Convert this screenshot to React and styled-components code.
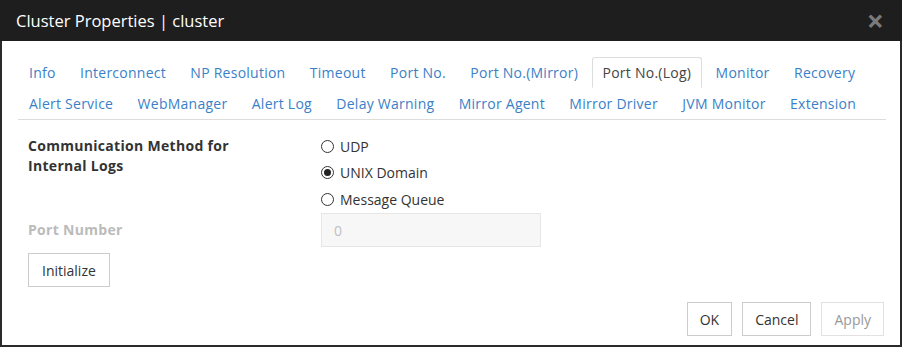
import { useState } from "react";
import styled, { createGlobalStyle } from "styled-components";

const GlobalStyle = createGlobalStyle`
  html, body {
    margin: 0;
    padding: 0;
    background: #ffffff;
  }
  body {
    font-family: "Open Sans", "Noto Sans", sans-serif;
    font-size: 14px;
    color: #333333;
  }
`;

const tabRows = [
  ["Info", "Interconnect", "NP Resolution", "Timeout", "Port No.", "Port No.(Mirror)", "Port No.(Log)", "Monitor", "Recovery"],
  ["Alert Service", "WebManager", "Alert Log", "Delay Warning", "Mirror Agent", "Mirror Driver", "JVM Monitor", "Extension"],
];

const methods = ["UDP", "UNIX Domain", "Message Queue"];

export default function App() {
  const [active, setActive] = useState("Port No.(Log)");
  const [method, setMethod] = useState("UNIX Domain");

  return (
    <>
      <GlobalStyle />
      <Dialog>
        <Header>
          <Title>Cluster Properties | cluster</Title>
          <Close>×</Close>
        </Header>
        <Body>
          <Tabs>
            {tabRows.map((row, i) => (
              <TabRow key={i}>
                {row.map((t) => (
                  <Tab key={t} $active={t === active} onClick={() => setActive(t)}>
                    {t}
                  </Tab>
                ))}
              </TabRow>
            ))}
          </Tabs>
          <Form>
            <Label>Communication Method for<br />Internal Logs</Label>
            <Radios>
              {methods.map((m) => (
                <RadioRow key={m} onClick={() => setMethod(m)}>
                  <Radio $checked={m === method} />
                  {m}
                </RadioRow>
              ))}
            </Radios>
            <Label $disabled>Port Number</Label>
            <Input value="0" disabled readOnly />
          </Form>
          <Button>Initialize</Button>
          <Footer>
            <Button>OK</Button>
            <Button>Cancel</Button>
            <Button $disabled>Apply</Button>
          </Footer>
        </Body>
      </Dialog>
    </>
  );
}

const Dialog = styled.div`
  width: 898px;
  height: 345px;
  border: 2px solid #2a2a2a;
  border-top: none;
  display: flex;
  flex-direction: column;
  background: #fff;
`;

const Header = styled.div`
  height: 41px;
  background: #1e1e1e;
  display: flex;
  align-items: center;
  justify-content: space-between;
  padding: 0 18px 0 16px;
  margin: 0 -2px;
`;

const Title = styled.div`
  color: #ffffff;
  font-size: 16.5px;
`;

const Close = styled.div`
  color: #7a7a7a;
  font-size: 30px;
  font-weight: 700;
  line-height: 1;
`;

const Body = styled.div`
  flex: 1;
  padding: 16px 15px 0 16px;
  display: flex;
  flex-direction: column;
`;

const Tabs = styled.div`
  border-bottom: 1px solid #dddddd;
  width: 868px;
`;

const TabRow = styled.div`
  display: flex;
  height: 31px;
`;

const Tab = styled.div`
  padding: 0 10px;
  margin-right: 2.4px;
  display: flex;
  align-items: center;
  letter-spacing: 0.25px;
  color: ${(p) => (p.$active ? "#444444" : "#3a7fc8")};
  border: 1px solid ${(p) => (p.$active ? "#dddddd" : "transparent")};
  border-bottom: ${(p) => (p.$active ? "1px solid #fff" : "1px solid transparent")};
  border-radius: 3px 3px 0 0;
  background: #fff;
  cursor: pointer;
`;

const Form = styled.div`
  display: grid;
  grid-template-columns: 293px 220px;
  row-gap: 4px;
  padding: 16px 0 0 10px;
`;

const Label = styled.div`
  font-weight: 700;
  line-height: 20px;
  letter-spacing: 0.3px;
  color: ${(p) => (p.$disabled ? "#bbbbbb" : "#333333")};
  align-self: ${(p) => (p.$disabled ? "center" : "start")};
`;

const Radios = styled.div`
  display: flex;
  flex-direction: column;
  gap: 6.5px;
`;

const RadioRow = styled.label`
  display: flex;
  align-items: center;
  gap: 6px;
  height: 20px;
  cursor: pointer;
`;

const Radio = styled.span`
  width: 11px;
  height: 11px;
  border-radius: 50%;
  border: 1px solid #333;
  display: flex;
  align-items: center;
  justify-content: center;
  &::after {
    content: "";
    width: 7px;
    height: 7px;
    border-radius: 50%;
    background: ${(p) => (p.$checked ? "#222" : "transparent")};
  }
`;

const Input = styled.input`
  box-sizing: border-box;
  height: 34px;
  width: 220px;
  border: 1px solid #e6e6e6;
  background: #f7f7f7;
  color: #c0c0c0;
  font: inherit;
  padding: 0 12px;
`;

const Button = styled.button`
  font: inherit;
  height: 34px;
  padding: 0 13px;
  background: #fff;
  border: 1px solid ${(p) => (p.$disabled ? "#e2e2e2" : "#cccccc")};
  color: ${(p) => (p.$disabled ? "#999999" : "#333333")};
  align-self: flex-start;
  margin: 6px 0 0 10px;
`;

const Footer = styled.div`
  display: flex;
  justify-content: flex-end;
  padding-right: 1px;
  margin-top: 15px;
  & > ${Button} {
    margin: 0 0 0 10px;
    padding: 0 12px;
  }
`;
